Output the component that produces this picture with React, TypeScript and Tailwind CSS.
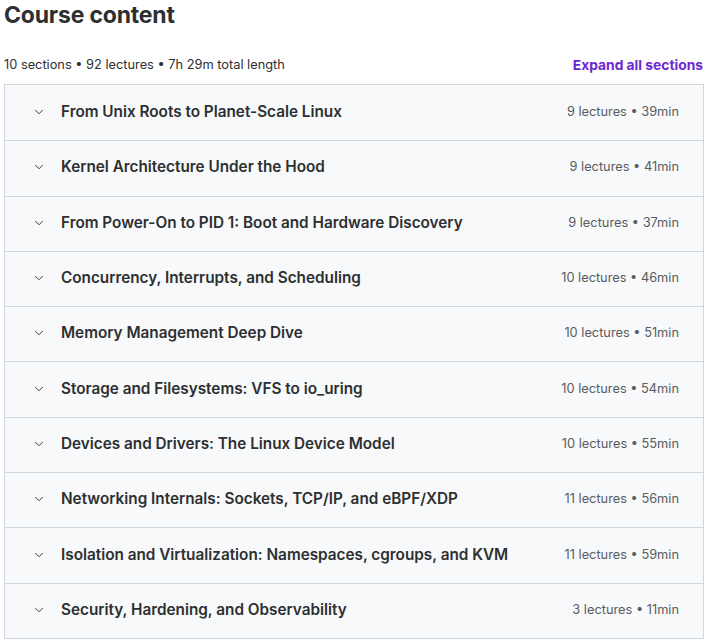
import { ChevronDown } from 'lucide-react';

const SECTIONS = [
  { title: 'From Unix Roots to Planet-Scale Linux', lectures: 9, length: '39min' },
  { title: 'Kernel Architecture Under the Hood', lectures: 9, length: '41min' },
  { title: 'From Power-On to PID 1: Boot and Hardware Discovery', lectures: 9, length: '37min' },
  { title: 'Concurrency, Interrupts, and Scheduling', lectures: 10, length: '46min' },
  { title: 'Memory Management Deep Dive', lectures: 10, length: '51min' },
  { title: 'Storage and Filesystems: VFS to io_uring', lectures: 10, length: '54min' },
  { title: 'Devices and Drivers: The Linux Device Model', lectures: 10, length: '55min' },
  { title: 'Networking Internals: Sockets, TCP/IP, and eBPF/XDP', lectures: 11, length: '56min' },
  { title: 'Isolation and Virtualization: Namespaces, cgroups, and KVM', lectures: 11, length: '59min' },
  { title: 'Security, Hardening, and Observability', lectures: 3, length: '11min' },
];

export default function App() {
  return (
    <div className="w-[708px] h-[642px] bg-white px-[4px] text-[#2d2f31]" style={{ fontFamily: 'Inter, "Noto Sans", sans-serif' }}>
      <h2 className="text-[23px] leading-[30px] font-bold tracking-[-0.2px]">Course content</h2>

      <div className="flex items-center justify-between mt-[25px] mb-[9px] h-[20px]">
        <span className="text-[12.8px] leading-[20px] text-[#2d2f31]">10 sections • 92 lectures • 7h 29m total length</span>
        <button className="text-[13.8px] leading-[20px] font-bold text-[#6d28d2] pr-[1px]">Expand all sections</button>
      </div>

      <div className="w-[700px] border border-[#d1d7dc]">
        {SECTIONS.map((s, i) => (
          <div
            key={s.title}
            className={`flex items-center h-[55.3px] bg-[#f7f9fa] pl-[27px] pr-[24px] pb-[2px] ${i > 0 ? 'border-t border-[#d1d7dc]' : ''}`}
          >
            <ChevronDown size={14} strokeWidth={1.6} className="text-[#2d2f31] shrink-0" />
            <span className="ml-[15px] flex-1 text-[15.3px] font-semibold leading-[20px] text-[#2d2f31]">{s.title}</span>
            <span className="text-[12.8px] leading-[20px] text-[#595c5f]">
              {s.lectures} lectures • {s.length}
            </span>
          </div>
        ))}
      </div>
    </div>
  );
}
